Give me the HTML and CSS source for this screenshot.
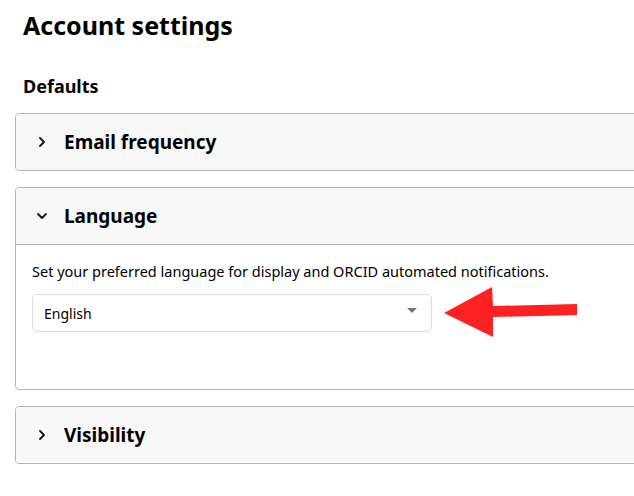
FILE: index.html
```html
<!DOCTYPE html>
<html lang="en">
<head>
    <meta charset="UTF-8">
    <meta name="viewport" content="width=device-width, initial-scale=1.0">
    <title>Account settings</title>
    <link rel="stylesheet" href="styles.css">
</head>
<body>
    <div class="page">
        <h1 class="page-title">Account settings</h1>
        <h2 class="section-title">Defaults</h2>

        <div class="panel">
            <div class="panel-header">
                <svg class="chevron" width="12" height="12" viewBox="0 0 12 12"><polyline points="4,2 8,6 4,10" /></svg>
                <span>Email frequency</span>
            </div>
        </div>

        <div class="panel open">
            <div class="panel-header">
                <svg class="chevron" width="12" height="12" viewBox="0 0 12 12"><polyline points="2,4 6,8 10,4" /></svg>
                <span>Language</span>
            </div>
            <div class="panel-body">
                <p class="panel-text">Set your preferred language for display and ORCID automated notifications.</p>
                <div class="select-box">
                    <span>English</span>
                    <span class="caret"></span>
                </div>
            </div>
        </div>

        <div class="panel">
            <div class="panel-header">
                <svg class="chevron" width="12" height="12" viewBox="0 0 12 12"><polyline points="4,2 8,6 4,10" /></svg>
                <span>Visibility</span>
            </div>
        </div>

        <svg class="pointer" width="140" height="60" viewBox="0 0 140 60">
            <polygon points="4,31 52,5 53,24 137,22 137,33 53,35 53,55" />
        </svg>
    </div>
</body>
</html>
```

FILE: styles.css
```css
body {
    margin: 0;
    font-family: "Noto Sans", "Open Sans", sans-serif;
    color: #000;
    background: #fff;
    overflow: hidden;
}
.page {
    position: relative;
    width: 700px;
    padding: 10px 0 0 15px;
}
.page-title {
    margin: 0 0 34px 8px;
    font-size: 25px;
    line-height: 31px;
    font-weight: 700;
}
.section-title {
    margin: 0 0 16px 8px;
    font-size: 18px;
    line-height: 22px;
    font-weight: 700;
}
.panel {
    border: 1px solid #b5b5b5;
    border-radius: 4px;
    margin-bottom: 16px;
    background: #fff;
    overflow: hidden;
}
.panel-header {
    display: flex;
    align-items: center;
    gap: 16px;
    padding: 14px 16px 14px 20px;
    background: #f8f8f8;
    font-size: 19px;
    line-height: 28px;
    font-weight: 700;
}
.open .panel-header {
    border-bottom: 1px solid #b5b5b5;
}
.chevron {
    fill: none;
    stroke: #111;
    stroke-width: 1.8;
    stroke-linecap: round;
    stroke-linejoin: round;
}
.panel-body {
    padding: 16px 16px 57px 16px;
}
.panel-text {
    margin: 0 0 13px 0;
    font-size: 14.5px;
    line-height: 20px;
}
.select-box {
    display: flex;
    align-items: center;
    justify-content: space-between;
    width: 400px;
    height: 38px;
    box-sizing: border-box;
    padding: 0 14px 0 11px;
    border: 1px solid #dcdcdc;
    border-radius: 5px;
    font-size: 14px;
}
.caret {
    width: 0;
    height: 0;
    border-left: 5px solid transparent;
    border-right: 5px solid transparent;
    border-top: 5px solid #777;
    margin-top: -5px;
}
.pointer {
    position: absolute;
    left: 440px;
    top: 282px;
}
.pointer polygon {
    fill: #ff2121;
}
```
